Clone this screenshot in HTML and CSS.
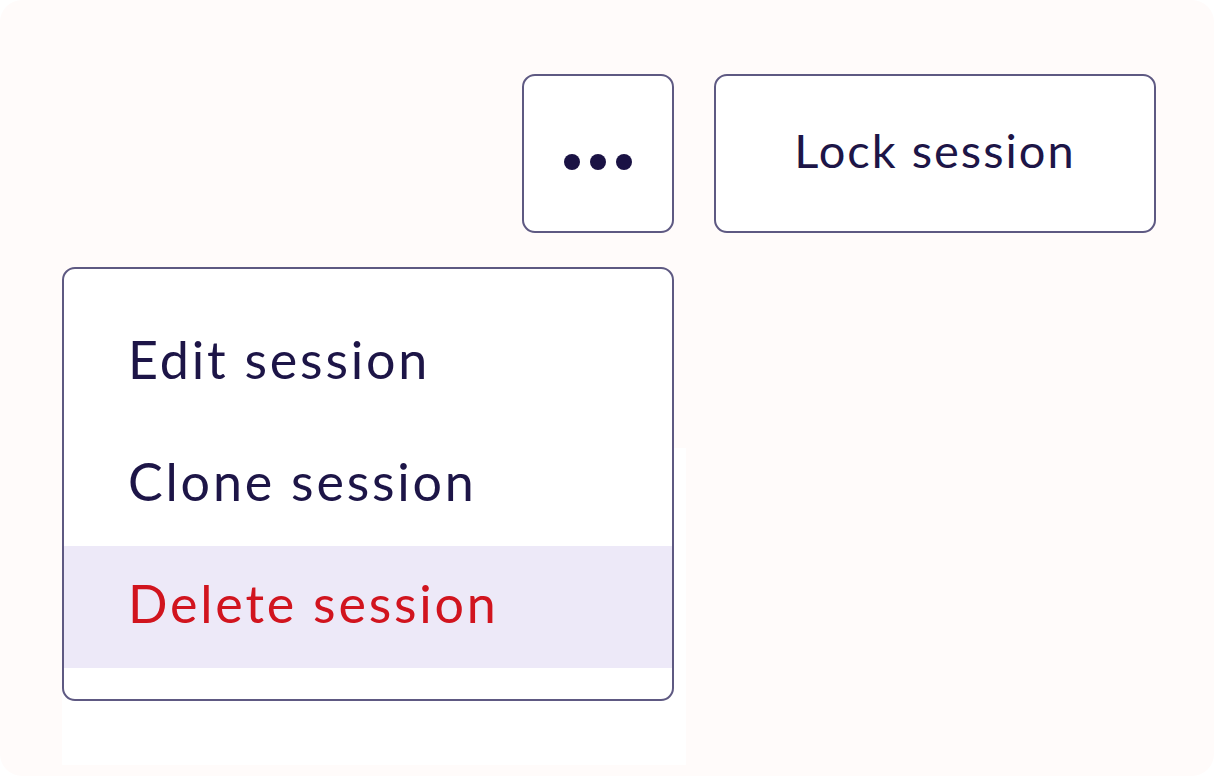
FILE: index.html
```html
<!DOCTYPE html>
<html lang="en">
<head>
<meta charset="utf-8">
<title>Session actions</title>
<link rel="stylesheet" href="styles.css">
</head>
<body>
<div class="frame">
  <div class="toolbar">
    <button class="btn btn-more" aria-label="More actions">
      <span class="dot"></span><span class="dot"></span><span class="dot"></span>
    </button>
    <button class="btn btn-lock">Lock session</button>
  </div>
  <div class="menu-area">
    <ul class="menu">
      <li class="item">Edit session</li>
      <li class="item">Clone session</li>
      <li class="item item-danger is-active">Delete session</li>
    </ul>
  </div>
</div>
</body>
</html>
```

FILE: styles.css
```css
* { box-sizing: border-box; }

html, body {
  margin: 0;
  padding: 0;
  background: #ffffff;
}

body {
  font-family: Lato, "Liberation Sans", sans-serif;
  color: #1d1547;
}

.frame {
  width: 1214px;
  height: 776px;
  background: #fffbfa;
  border-radius: 22px;
  overflow: hidden;
  padding: 74px 58px 0 62px;
  display: flex;
  flex-direction: column;
}

.toolbar {
  display: flex;
  justify-content: flex-end;
  gap: 40px;
}

.btn {
  height: 159px;
  background: #ffffff;
  border: 2px solid #5e5982;
  border-radius: 13px;
  font-family: inherit;
  color: #1d1547;
  padding: 0;
  cursor: pointer;
}

.btn-more {
  width: 152px;
  display: flex;
  align-items: center;
  justify-content: center;
  gap: 10px;
  padding-top: 16px;
}

.dot {
  width: 16px;
  height: 16px;
  border-radius: 50%;
  background: #1a1244;
}

.btn-lock {
  width: 442px;
  font-size: 47px;
  letter-spacing: 2px;
  padding-bottom: 8px;
}

.menu-area {
  position: relative;
  width: 624px;
  margin-top: 34px;
}

.menu-area::before {
  content: "";
  position: absolute;
  left: 0;
  right: 0;
  top: 181px;
  height: 317px;
  background: #ffffff;
}

.menu {
  position: relative;
  list-style: none;
  margin: 0;
  width: 612px;
  padding: 33px 0 31px;
  background: #ffffff;
  border: 2px solid #5e5982;
  border-radius: 13px;
  overflow: hidden;
}

.item {
  height: 122px;
  display: flex;
  align-items: center;
  padding-left: 64px;
  padding-bottom: 8px;
  font-size: 52px;
  letter-spacing: 2.8px;
  color: #1d1547;
}

.item-danger {
  color: #d1141e;
}

.item.is-active {
  background: #ede9f8;
}
```
